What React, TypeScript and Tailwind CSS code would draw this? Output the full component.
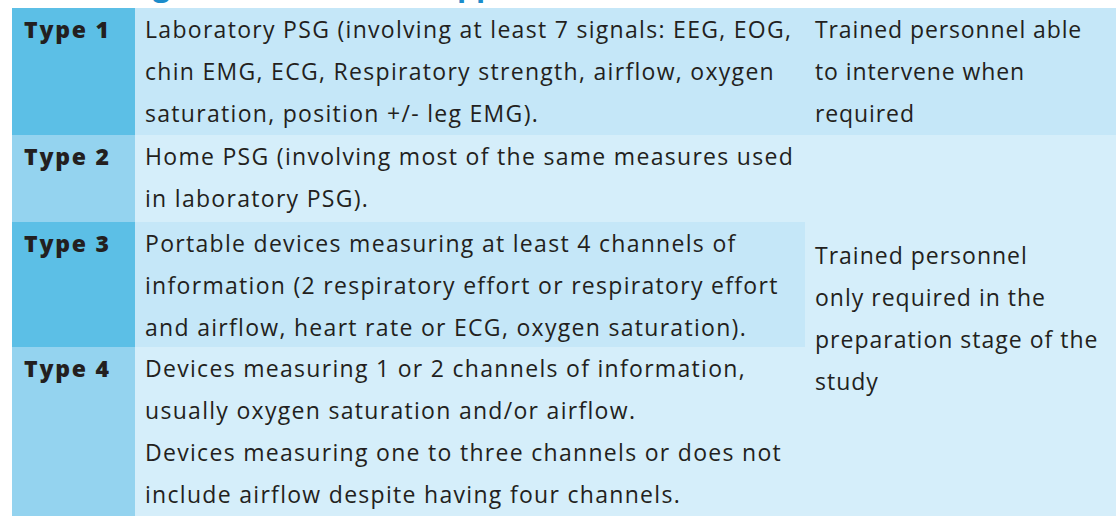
import React from "react";

const font = { fontFamily: "'Open Sans', Lato, sans-serif" };

function Lines({ lines }: { lines: string[] }) {
  return (
    <>
      {lines.map((l, i) => (
        <div key={i} className="whitespace-nowrap">{l}</div>
      ))}
    </>
  );
}

export default function App() {
  return (
    <div className="w-[1116px] h-[518px] bg-white overflow-hidden text-[#231f20]" style={font}>
      <div className="relative h-[8px] overflow-hidden">
        <span className="absolute left-[153px] top-[-30px] text-[30px] leading-[30px] font-bold text-[#1b8ccb]">g</span>
        <span className="absolute left-[457px] top-[-30px] text-[30px] leading-[30px] font-bold text-[#1b8ccb]">pp</span>
      </div>
      <div className="ml-[12px] grid grid-cols-[123px_670px_1fr] grid-rows-[127px_87px_125px_169px] text-[23px] leading-[42px] tracking-[1.3px]">
        <div className="bg-[#5cbfe6] pl-[12px] font-extrabold tracking-[1.8px]">Type 1</div>
        <div className="bg-[#c5e7f8] pl-[10px]">
          <Lines
            lines={[
              "Laboratory PSG (involving at least 7 signals: EEG, EOG,",
              "chin EMG, ECG, Respiratory strength, airflow, oxygen",
              "saturation, position +/- leg EMG).",
            ]}
          />
        </div>
        <div className="bg-[#c5e7f8] pl-[10px] tracking-[0.9px]">
          <Lines lines={["Trained personnel able", "to intervene when", "required"]} />
        </div>

        <div className="bg-[#94d3ef] pl-[12px] font-extrabold tracking-[1.8px]">Type 2</div>
        <div className="bg-[#d5eefa] pl-[10px]">
          <Lines lines={["Home PSG (involving most of the same measures used", "in laboratory PSG)."]} />
        </div>
        <div className="row-span-3 bg-[#d5eefa] pl-[10px] pt-[99px] tracking-[1px]">
          <Lines lines={["Trained personnel", "only required in the", "preparation stage of the", "study"]} />
        </div>

        <div className="bg-[#5cbfe6] pl-[12px] font-extrabold tracking-[1.8px]">Type 3</div>
        <div className="bg-[#c5e7f8] pl-[10px]">
          <Lines
            lines={[
              "Portable devices measuring at least 4 channels of",
              "information (2 respiratory effort or respiratory effort",
              "and airflow, heart rate or ECG, oxygen saturation).",
            ]}
          />
        </div>

        <div className="bg-[#94d3ef] pl-[12px] font-extrabold tracking-[1.8px]">Type 4</div>
        <div className="bg-[#d5eefa] pl-[10px]">
          <Lines
            lines={[
              "Devices measuring 1 or 2 channels of information,",
              "usually oxygen saturation and/or airflow.",
              "Devices measuring one to three channels or does not",
              "include airflow despite having four channels.",
            ]}
          />
        </div>
      </div>
    </div>
  );
}
